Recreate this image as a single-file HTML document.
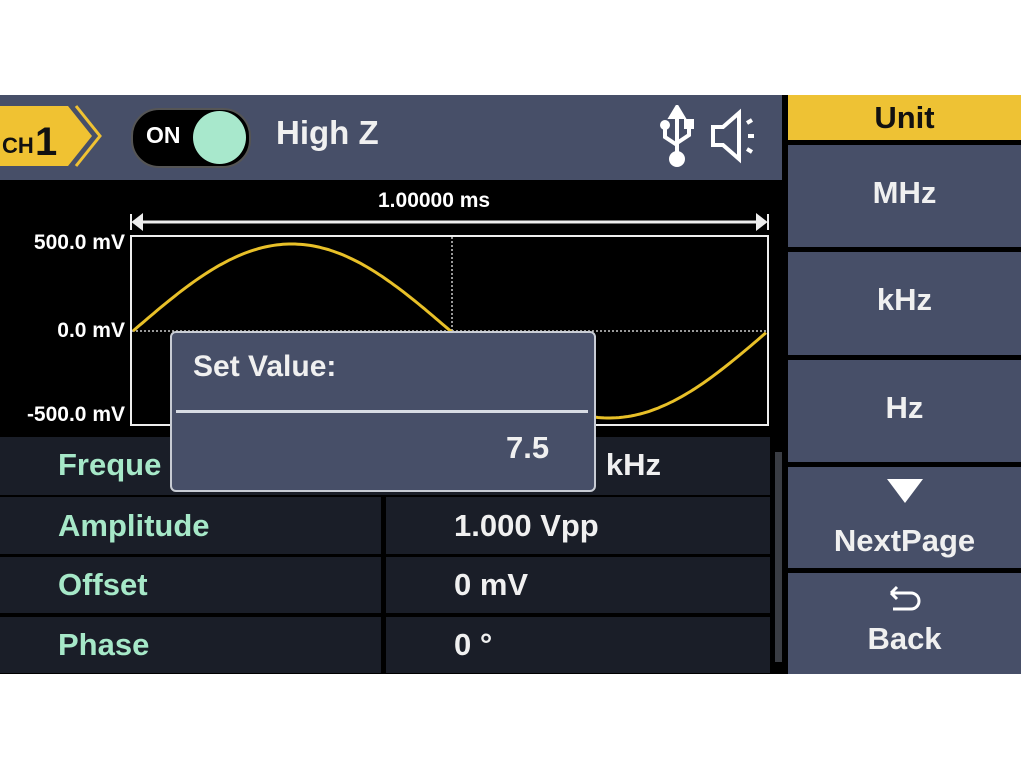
<!DOCTYPE html>
<html><head><style>
body{margin:0;width:1024px;height:768px;background:#fff;position:relative;overflow:hidden;font-family:"Liberation Sans",sans-serif;font-weight:bold;}
.a{position:absolute;}
.hdr{left:0;top:95px;width:782px;height:85px;background:#474f68;}
.plot{left:0;top:180px;width:782px;height:494px;background:#000;}
.rp{left:782px;top:95px;width:239px;height:579px;background:#000;}
.btn{position:absolute;left:788px;width:233px;background:#474f68;color:#f0f0f0;font-size:31px;text-align:center;}
.row{position:absolute;background:#1a1e28;color:#f0f0f0;font-size:31px;}
.lab{color:#a6e8c8;}
.lbl{color:#fff;font-size:21px;position:absolute;text-align:right;width:125px;left:0;}
</style></head><body>
<div class="a hdr"></div>
<div class="a plot"></div>
<div class="a rp"></div>
<svg class="a" style="left:0;top:103px" width="105" height="66">
<polygon points="0,3 68,3 92,33 68,63 0,63" fill="#f0c232"/>
<polyline points="76,3 100,33 76,63" fill="none" stroke="#f0c232" stroke-width="3"/>
<text x="2" y="50" font-size="22" font-weight="bold" fill="#111" font-family="Liberation Sans">CH</text>
<text x="35" y="52" font-size="40" font-weight="bold" fill="#111" font-family="Liberation Sans">1</text>
</svg>
<div class="a" style="left:131px;top:108px;width:116px;height:56px;border-radius:28px;background:#000;border:2px solid #555;"></div>
<div class="a" style="left:146px;top:122px;color:#fff;font-size:23px;">ON</div>
<div class="a" style="left:193px;top:111px;width:53px;height:53px;border-radius:50%;background:#a8e8cc;"></div>
<div class="a" style="left:276px;top:114px;color:#f0f0f0;font-size:33px;">High Z</div>
<svg class="a" style="left:655px;top:105px" width="110" height="65" fill="none" stroke="#fff" stroke-width="4">
<path d="M22 8V52M22 2l-6 10h12z" fill="#fff"/>
<circle cx="22" cy="54" r="6" fill="#fff"/>
<path d="M10 22v10l12 8M34 20v10l-12 8"/>
<circle cx="10" cy="20" r="3" fill="#fff"/><rect x="31" y="16" width="6" height="6" fill="#fff"/>
<path d="M58 22h10l16-14v46L68 40H58z"/>
<path d="M92 18l5-3M93 31h6M92 44l5 3"/>
</svg>
<div class="a" style="left:788px;top:95px;width:233px;height:45px;background:#eec234;color:#111;font-size:31px;text-align:center;line-height:45px;">Unit</div>
<div class="btn" style="top:145px;height:102px;line-height:95px;">MHz</div>
<div class="btn" style="top:252px;height:103px;line-height:95px;">kHz</div>
<div class="btn" style="top:360px;height:102px;line-height:95px;">Hz</div>
<div class="btn" style="top:467px;height:101px;"><div style="margin:12px auto 0;width:0;height:0;border-left:18px solid transparent;border-right:18px solid transparent;border-top:24px solid #fff;"></div><div style="margin-top:20px;">NextPage</div></div>
<div class="btn" style="top:573px;height:101px;"><svg width="40" height="34" style="display:block;margin:10px auto 0" fill="none" stroke="#fff" stroke-width="3"><path d="M6 10h20a8 8 0 0 1 0 16H8M6 10l6-6M6 10l6 6"/></svg><div style="margin-top:4px;">Back</div></div>
<div class="a" style="left:378px;top:189px;color:#fff;font-size:21px;">1.00000 ms</div>
<svg class="a" style="left:0;top:180px" width="782" height="257">
<path d="M133 42H766" stroke="#eee" stroke-width="3"/>
<path d="M131 34v16M133 42l9-7v14z" fill="#eee" stroke="#eee" stroke-width="2"/>
<path d="M768 34v16M766 42l-9-7v14z" fill="#eee" stroke="#eee" stroke-width="2"/>
<rect x="131" y="56" width="637" height="189" fill="none" stroke="#eee" stroke-width="2"/>
<path d="M132 151H768M452 57V245" stroke="#ccc" stroke-width="1.5" stroke-dasharray="2 2"/>
<path id="s" fill="none" stroke="#e8c028" stroke-width="3" d=""/>
</svg>
<div class="lbl" style="top:231px;">500.0 mV</div>
<div class="lbl" style="top:319px;">0.0 mV</div>
<div class="lbl" style="top:403px;">-500.0 mV</div>
<div class="row" style="left:0;top:437px;width:770px;height:58px;"></div>
<div class="row lab" style="left:0;top:497px;width:381px;height:57px;line-height:57px;padding-left:58px;box-sizing:border-box;">Amplitude</div>
<div class="row" style="left:386px;top:497px;width:384px;height:57px;line-height:57px;padding-left:68px;box-sizing:border-box;">1.000 Vpp</div>
<div class="row lab" style="left:0;top:557px;width:381px;height:56px;line-height:56px;padding-left:58px;box-sizing:border-box;">Offset</div>
<div class="row" style="left:386px;top:557px;width:384px;height:56px;line-height:56px;padding-left:68px;box-sizing:border-box;">0 mV</div>
<div class="row lab" style="left:0;top:617px;width:381px;height:56px;line-height:56px;padding-left:58px;box-sizing:border-box;">Phase</div>
<div class="row" style="left:386px;top:617px;width:384px;height:56px;line-height:56px;padding-left:68px;box-sizing:border-box;">0 °</div>
<div class="a lab" style="left:58px;top:447px;font-size:31px;">Freque</div>
<div class="a" style="left:580px;top:447px;font-size:31px;color:#f0f0f0;">0 kHz</div>
<div class="a" style="left:775px;top:452px;width:7px;height:210px;background:#3a3d44;"></div>
<div class="a" style="left:170px;top:331px;width:422px;height:157px;background:#474f68;border:2px solid #c8ccd4;border-radius:6px;"></div>
<div class="a" style="left:176px;top:410px;width:412px;height:3px;background:#d8dce4;"></div>
<div class="a" style="left:193px;top:350px;color:#f0f0f0;font-size:30px;">Set Value:</div>
<div class="a" style="left:506px;top:430px;color:#f0f0f0;font-size:31px;">7.5</div>
<script>
var d="";for(var x=133;x<=768;x+=3){var y=151-87*Math.sin((x-133)/(635)*2*Math.PI);d+=(x==133?"M":"L")+x+" "+y.toFixed(1);}
document.getElementById("s").setAttribute("d",d);
</script>
</body></html>
